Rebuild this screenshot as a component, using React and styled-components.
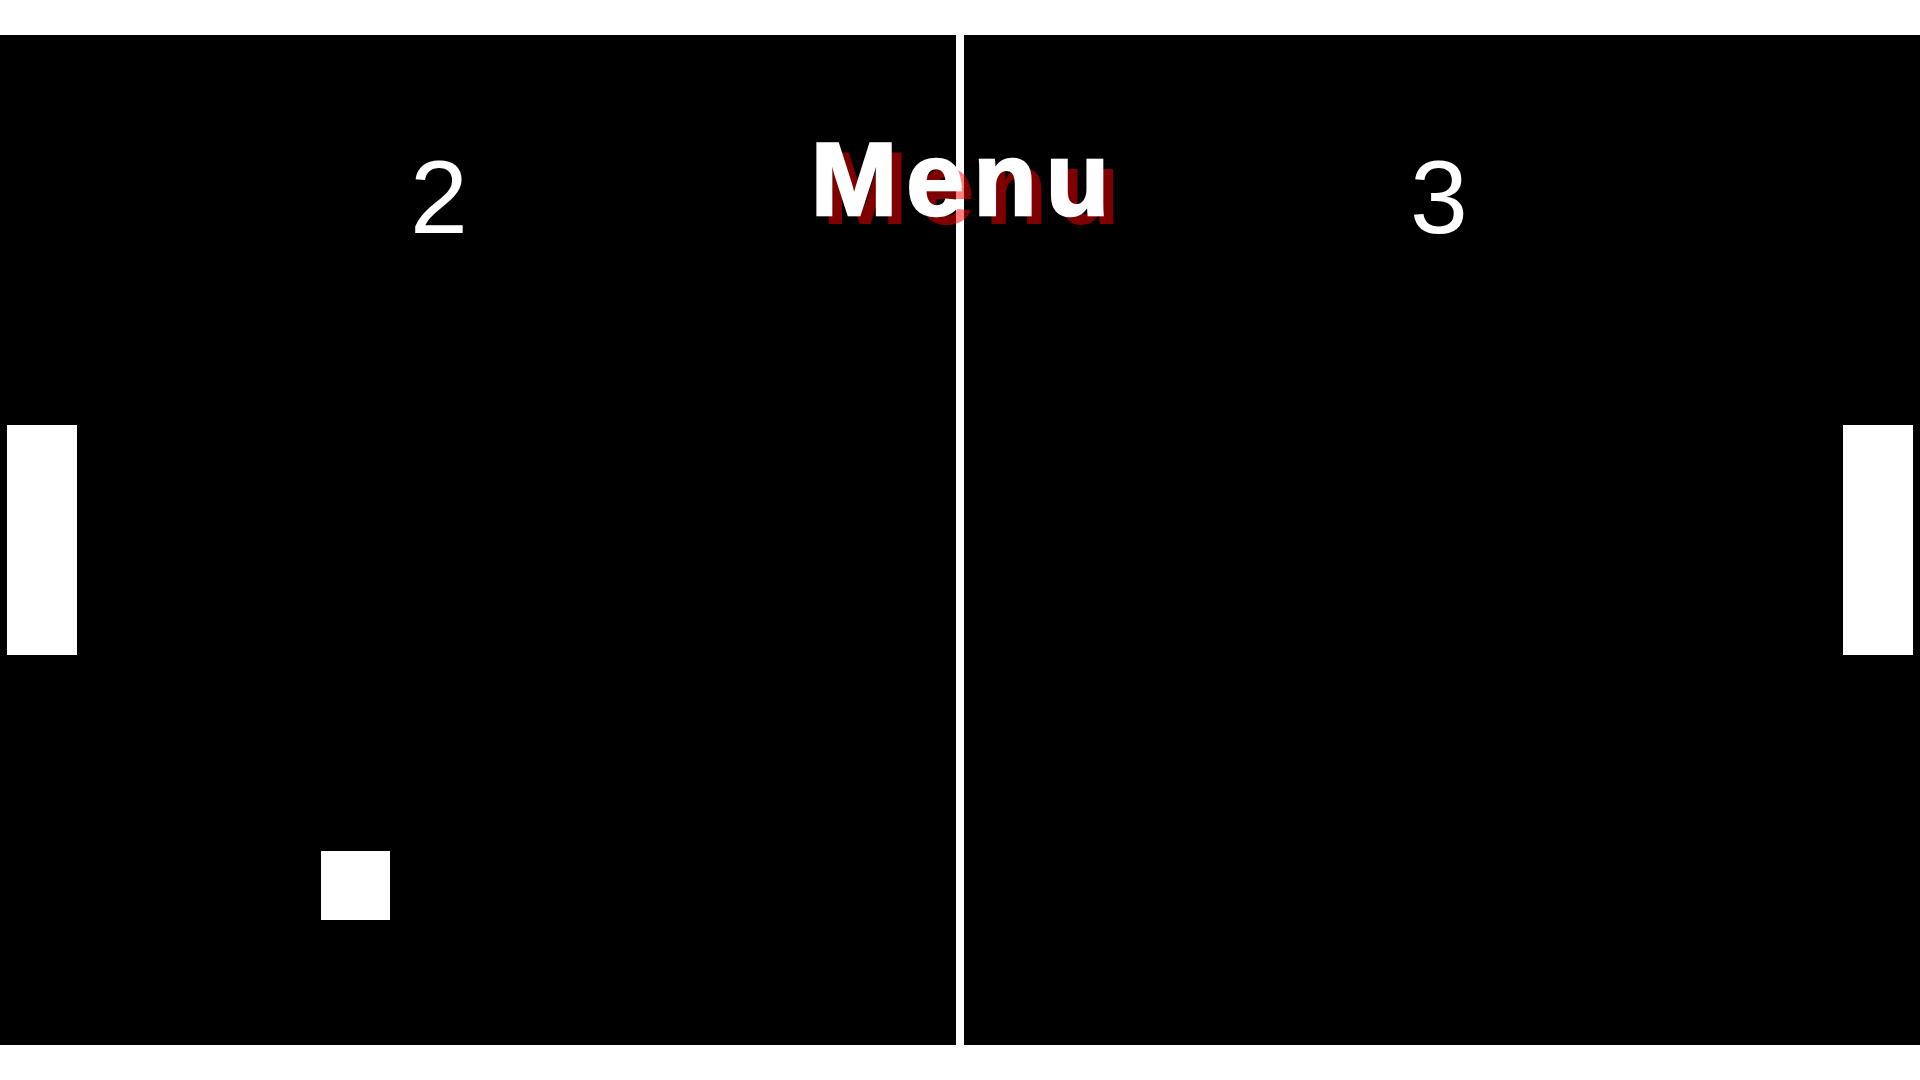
import React from 'react';
import styled, { createGlobalStyle } from 'styled-components';

const GlobalStyle = createGlobalStyle`
  html, body {
    margin: 0;
    padding: 0;
    background-color: #fff;
    font-family: "Liberation Sans", Arial, sans-serif;
  }
`;

const Page = styled.div`
  width: 1920px;
  height: 1080px;
  padding: 35px 0;
  box-sizing: border-box;
`;

// the playing field: two halves split by the net
const Board = styled.div`
  position: relative;
  display: grid;
  grid-template-columns: 1fr 8px 1fr;
  width: 100%;
  height: 1010px;
  background-color: #000;
  overflow: hidden;
`;

const Half = styled.div`
  background-color: #000;
`;

const NetLine = styled.div`
  background-color: #fff;
`;

const Score = styled.span`
  position: absolute;
  top: 110px;
  left: ${(props) => props.left}px;
  width: 56px;
  text-align: center;
  color: #fff;
  font-size: 104px;
  line-height: 1;
`;

const Menu = styled.h1`
  position: absolute;
  top: 92px;
  left: 0;
  right: 0;
  margin: 0;
  padding-left: 9px;
  text-align: center;
  color: #fff;
  font-size: 104px;
  font-weight: 700;
  line-height: 1;
  letter-spacing: 9px;
  -webkit-text-stroke: 2.5px #fff;
  text-shadow: 11px 9px 0 rgba(255, 0, 0, 0.5);
  cursor: pointer;
`;

const Paddle = styled.div`
  position: absolute;
  top: 390px;
  ${(props) => (props.side === 'left' ? 'left: 7px;' : 'right: 7px;')}
  width: 70px;
  height: 230px;
  background-color: #fff;
`;

const Ball = styled.div`
  position: absolute;
  left: ${(props) => props.x}px;
  top: ${(props) => props.y}px;
  width: 69px;
  height: 69px;
  background-color: #fff;
`;

function App() {
  return (
    <>
      <GlobalStyle />
      <Page>
        <Board>
          <Half />
          <NetLine />
          <Half />
          <Score left={410}>2</Score>
          <Score left={1410}>3</Score>
          <Paddle side="left" />
          <Paddle side="right" />
          <Ball x={321} y={816} />
          <Menu>Menu</Menu>
        </Board>
      </Page>
    </>
  );
}

export default App;
